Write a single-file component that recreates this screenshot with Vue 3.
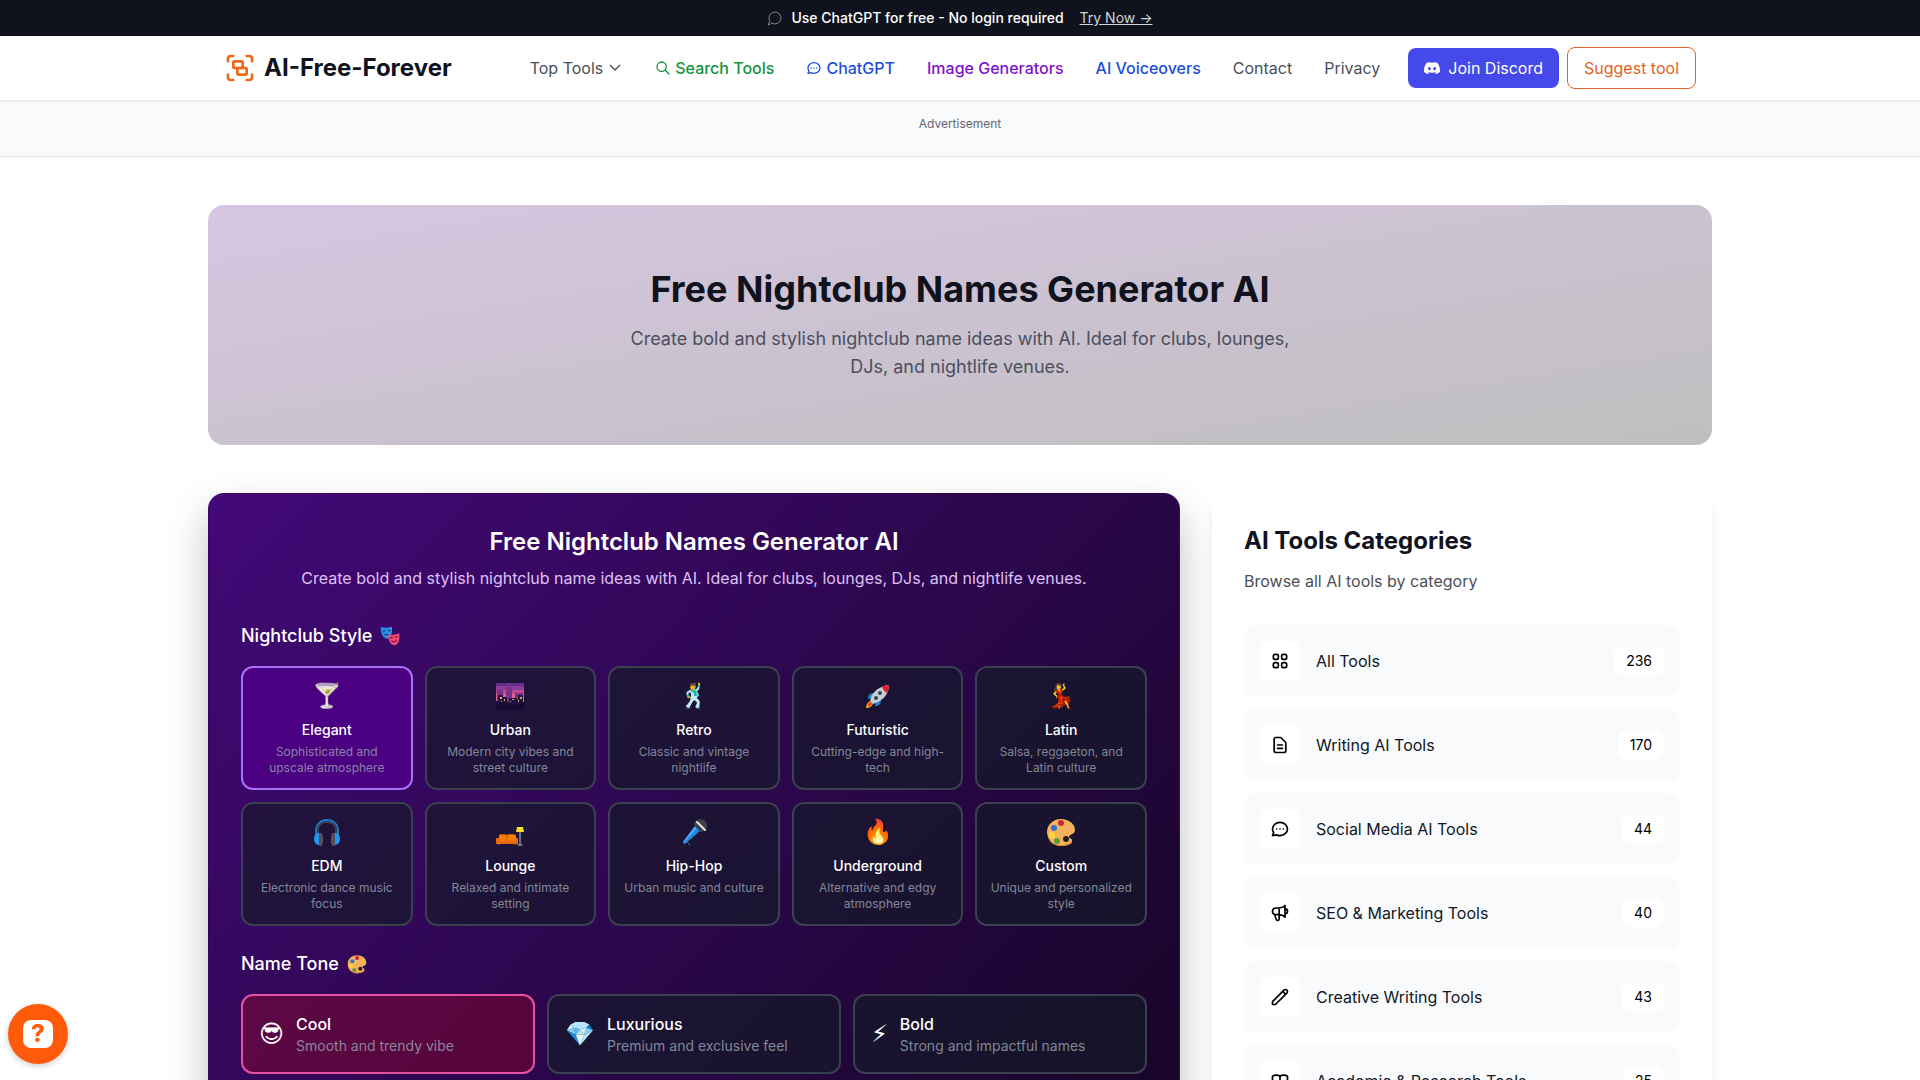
<template>
  <div class="page">
    <!-- Top announcement -->
    <div class="announce">
      <svg class="icon-thin" width="16" height="16" viewBox="0 0 24 24">
        <path d="M7.9 20A9 9 0 1 0 4 16.1L2 22Z" />
      </svg>
      <span class="announce-text">Use ChatGPT for free - No login required</span>
      <a href="#" class="announce-link">Try Now →</a>
    </div>

    <header class="header">
      <div class="header-inner">
        <a href="#" class="brand">
          <svg class="icon" width="32" height="32" viewBox="0 0 24 24">
            <path d="M3 7V5c0-1.1.9-2 2-2h2M17 3h2c1.1 0 2 .9 2 2v2M21 17v2c0 1.1-.9 2-2 2h-2M7 21H5c-1.1 0-2-.9-2-2v-2" />
            <rect x="7" y="7" width="7" height="5" rx="1" />
            <rect x="10" y="12" width="7" height="5" rx="1" />
          </svg>
          <span class="brand-name">AI-Free-Forever</span>
        </a>

        <nav class="nav">
          <button type="button" class="nav-link nav-drop">
            Top Tools
            <svg class="icon" width="16" height="16" viewBox="0 0 24 24">
              <path d="M5 8l7 7 7-7" />
            </svg>
          </button>
          <a href="#" class="nav-link green">
            <svg class="icon" width="16" height="16" viewBox="0 0 24 24">
              <path d="M21 21l-6-6m2-5a7 7 0 11-14 0 7 7 0 0114 0z" />
            </svg>
            Search Tools
          </a>
          <a href="#" class="nav-link blue">
            <svg class="icon" width="16" height="16" viewBox="0 0 24 24">
              <path :d="icons.chat" />
            </svg>
            ChatGPT
          </a>
          <a href="#" class="nav-link purple">Image Generators</a>
          <a href="#" class="nav-link blue">AI Voiceovers</a>
          <a href="#" class="nav-link">Contact</a>
          <a href="#" class="nav-link">Privacy</a>
        </nav>

        <div class="actions">
          <a href="#" class="btn btn-discord">
            <svg width="16" height="16" viewBox="0 0 24 24" fill="currentColor">
              <path d="M20.317 4.37a19.79 19.79 0 00-4.885-1.515.074.074 0 00-.079.037c-.21.375-.444.864-.608 1.25a18.27 18.27 0 00-5.487 0 12.64 12.64 0 00-.617-1.25.077.077 0 00-.079-.037A19.736 19.736 0 003.677 4.37a.07.07 0 00-.032.027C.533 9.046-.32 13.58.099 18.057a.082.082 0 00.031.057 19.9 19.9 0 005.993 3.03.078.078 0 00.084-.028c.462-.63.874-1.295 1.226-1.994a.076.076 0 00-.041-.106 13.107 13.107 0 01-1.872-.892.077.077 0 01-.008-.128c.126-.094.252-.192.372-.292a.074.074 0 01.077-.01c3.928 1.793 8.18 1.793 12.062 0a.074.074 0 01.078.01c.12.098.246.198.373.292a.077.077 0 01-.006.127 12.3 12.3 0 01-1.873.892.077.077 0 00-.041.107c.36.698.772 1.362 1.225 1.993a.076.076 0 00.084.028 19.839 19.839 0 006.002-3.03.077.077 0 00.032-.054c.5-5.177-.838-9.674-3.549-13.66a.061.061 0 00-.031-.03zM8.02 15.33c-1.183 0-2.157-1.085-2.157-2.419 0-1.333.956-2.419 2.157-2.419 1.21 0 2.176 1.096 2.157 2.42 0 1.333-.956 2.418-2.157 2.418zm7.975 0c-1.183 0-2.157-1.085-2.157-2.419 0-1.333.955-2.419 2.157-2.419 1.21 0 2.176 1.096 2.157 2.42 0 1.333-.946 2.418-2.157 2.418z" />
            </svg>
            Join Discord
          </a>
          <a href="#" class="btn btn-suggest">Suggest tool</a>
        </div>
      </div>
    </header>

    <div class="ad">Advertisement</div>

    <main class="container">
      <section class="hero">
        <h1 class="hero-title">Free Nightclub Names Generator AI</h1>
        <p class="hero-text">
          Create bold and stylish nightclub name ideas with AI. Ideal for clubs, lounges, DJs, and nightlife venues.
        </p>
      </section>

      <div class="columns">
        <section class="generator">
          <h2 class="gen-title">Free Nightclub Names Generator AI</h2>
          <p class="gen-text">
            Create bold and stylish nightclub name ideas with AI. Ideal for clubs, lounges, DJs, and nightlife venues.
          </p>

          <h3 class="group-title">
            Nightclub Style
            <svg width="20" height="20" viewBox="-1 -1 30 30">
              <path v-for="(p, i) in art.masks" :key="i" :d="p[0]" :fill="p[1]" :stroke="p[2]" :stroke-width="p[3]" />
            </svg>
          </h3>
          <div class="styles">
            <button
              v-for="item in styles"
              :key="item.name"
              type="button"
              class="style-card"
              :class="{ active: item.name === selectedStyle }"
              @click="selectedStyle = item.name"
            >
              <span class="style-emoji">
                <svg v-if="item.art" width="28" height="28" viewBox="0 0 28 28">
                  <path
                    v-for="(p, i) in art[item.art]"
                    :key="i"
                    :d="p[0]"
                    :fill="p[1]"
                    :stroke="p[2]"
                    :stroke-width="p[3]"
                    stroke-linecap="round"
                  />
                </svg>
                <template v-else>{{ item.emoji }}</template>
              </span>
              <span class="style-name">{{ item.name }}</span>
              <span class="style-desc">{{ item.desc }}</span>
            </button>
          </div>

          <h3 class="group-title">
            Name Tone
            <svg width="20" height="20" viewBox="-1 -1 30 30">
              <path v-for="(p, i) in art.palette" :key="i" :d="p[0]" :fill="p[1]" :stroke="p[2]" :stroke-width="p[3]" />
            </svg>
          </h3>
          <div class="tones">
            <button
              v-for="tone in tones"
              :key="tone.name"
              type="button"
              class="tone-card"
              :class="{ active: tone.name === selectedTone }"
              @click="selectedTone = tone.name"
            >
              <span class="tone-emoji">{{ tone.emoji }}</span>
              <span class="tone-body">
                <span class="tone-name">{{ tone.name }}</span>
                <span class="tone-desc">{{ tone.desc }}</span>
              </span>
            </button>
          </div>
        </section>

        <aside class="sidebar">
          <h2 class="side-title">AI Tools Categories</h2>
          <p class="side-text">Browse all AI tools by category</p>
          <ul class="categories">
            <li v-for="cat in categories" :key="cat.name">
              <a href="#" class="category">
                <span class="category-icon">
                  <svg class="icon" width="20" height="20" viewBox="0 0 24 24">
                    <path :d="icons[cat.icon]" />
                  </svg>
                </span>
                <span class="category-name">{{ cat.name }}</span>
                <span class="category-count">{{ cat.count }}</span>
              </a>
            </li>
          </ul>
        </aside>
      </div>
    </main>

    <button type="button" class="help"><span class="help-mark">?</span></button>
  </div>
</template>

<script setup>
import { ref } from 'vue'

const selectedStyle = ref('Elegant')
const selectedTone = ref('Cool')

const styles = [
  { name: 'Elegant', emoji: '🍸', desc: 'Sophisticated and upscale atmosphere' },
  { name: 'Urban', art: 'city', desc: 'Modern city vibes and street culture' },
  { name: 'Retro', emoji: '🕺', desc: 'Classic and vintage nightlife' },
  { name: 'Futuristic', art: 'rocket', desc: 'Cutting-edge and high-tech' },
  { name: 'Latin', emoji: '💃', desc: 'Salsa, reggaeton, and Latin culture' },
  { name: 'EDM', art: 'headphones', desc: 'Electronic dance music focus' },
  { name: 'Lounge', art: 'sofa', desc: 'Relaxed and intimate setting' },
  { name: 'Hip-Hop', art: 'mic', desc: 'Urban music and culture' },
  { name: 'Underground', emoji: '🔥', desc: 'Alternative and edgy atmosphere' },
  { name: 'Custom', art: 'palette', desc: 'Unique and personalized style' },
]

const tones = [
  { name: 'Cool', emoji: '😎\uFE0E', desc: 'Smooth and trendy vibe' },
  { name: 'Luxurious', emoji: '💎', desc: 'Premium and exclusive feel' },
  { name: 'Bold', emoji: '⚡\uFE0E', desc: 'Strong and impactful names' },
]

const categories = [
  { name: 'All Tools', count: 236, icon: 'grid' },
  { name: 'Writing AI Tools', count: 170, icon: 'doc' },
  { name: 'Social Media AI Tools', count: 44, icon: 'chat' },
  { name: 'SEO & Marketing Tools', count: 40, icon: 'horn' },
  { name: 'Creative Writing Tools', count: 43, icon: 'pencil' },
  { name: 'Academic & Research Tools', count: 25, icon: 'book' },
]

const icons = {
  grid: 'M4 6a2 2 0 012-2h2a2 2 0 012 2v2a2 2 0 01-2 2H6a2 2 0 01-2-2V6zM14 6a2 2 0 012-2h2a2 2 0 012 2v2a2 2 0 01-2 2h-2a2 2 0 01-2-2V6zM4 16a2 2 0 012-2h2a2 2 0 012 2v2a2 2 0 01-2 2H6a2 2 0 01-2-2v-2zM14 16a2 2 0 012-2h2a2 2 0 012 2v2a2 2 0 01-2 2h-2a2 2 0 01-2-2v-2z',
  doc: 'M9 12h6m-6 4h6m2 5H7a2 2 0 01-2-2V5a2 2 0 012-2h5.586a1 1 0 01.707.293l5.414 5.414a1 1 0 01.293.707V19a2 2 0 01-2 2z',
  chat: 'M8 12h.01M12 12h.01M16 12h.01M21 12c0 4.418-4.03 8-9 8a9.863 9.863 0 01-4.255-.949L3 20l1.395-3.72C3.512 15.042 3 13.574 3 12c0-4.418 4.03-8 9-8s9 3.582 9 8z',
  horn: 'M11 5.882V19.24a1.76 1.76 0 01-3.417.592l-2.147-6.15M18 13a3 3 0 100-6M5.436 13.683A4.001 4.001 0 017 6h1.832c4.1 0 7.625-1.234 9.168-3v14c-1.543-1.766-5.067-3-9.168-3H7a3.988 3.988 0 01-1.564-.317z',
  pencil: 'M15.232 5.232l3.536 3.536m-2.036-5.036a2.5 2.5 0 113.536 3.536L6.5 21.036H3v-3.572L16.732 3.732z',
  book: 'M12 6.253v13m0-13C10.832 5.477 9.246 5 7.5 5S4.168 5.477 3 6.253v13C4.168 18.477 5.754 18 7.5 18s3.332.477 4.5 1.253m0-13C13.168 5.477 14.754 5 16.5 5c1.747 0 3.332.477 4.5 1.253v13C19.832 18.477 18.247 18 16.5 18c-1.746 0-3.332.477-4.5 1.253',
}

// colour drawings, each entry is [path, fill, stroke, stroke width]
const art = {
  city: [
    ['M0 1h28v27H0z', '#5d2f91'],
    ['M0 4h28v4H0z', '#8b3c97'],
    ['M0 8h28v4H0z', '#c04d92'],
    ['M0 12h28v8H0z', '#e0628a'],
    ['M10 6l1-1V2h4v3l1 1v14h-6zM1 8h6v12H1zM19 11h8v9h-8z', '#793189'],
    ['M0 19h2v-6h5v2h4v5h2v-4h8v2h1v-5h5v15H0z', '#251047'],
    ['M0 20h8v-2h3v4h10v-2h7v8H0z', '#180a36'],
    ['M4 15h2v2H4zM8 17h1v2H8zM16 17h2v1h-2zM14 19h1v1h-1zM24 15h2v2h-2zM22 18h1v2h-1zM5 19h1v1H5z', '#e2a84c'],
  ],
  rocket: [
    ['M2 26c0-4 2-6 4-7l3 3c-1 2-3 4-7 4z', '#f6a21c'],
    ['M4 24c0-2 1-3 2-4l2 2c-1 1-2 2-4 2z', '#d9381e'],
    ['M10 11c-4 0-6 2-6 6l4-1zM17 18c0 4-2 6-6 6l1-5z', '#1e88c9'],
    ['M6 19C8 10 15 4 25 3c0 10-7 16-16 19z', '#c9ced3'],
    ['M18 5c2-1 5-2 7-2 0 2-1 6-2 8-2-1-4-3-5-6z', '#dc1f2e'],
    ['M14 11a2 2 0 104 0 2 2 0 10-4 0zM10 16a2 2 0 104 0 2 2 0 10-4 0z', '#2d4552'],
  ],
  headphones: [
    ['M3 19v-6C3 6 8 2 14 2s11 4 11 11v6', 'none', '#1f78c8', 2],
    ['M5 19v-6c0-6 4-9 9-9s9 3 9 9v6', 'none', '#3d434b', 2],
    ['M5 15c-3 1-4 3-4 6s2 6 5 6V15zM23 15c3 1 4 3 4 6s-2 6-5 6V15z', '#2095ee'],
    ['M6 15h3v13H6zM19 15h3v13h-3z', '#4f5156'],
    ['M9 16c1 3 1 8 0 11zM19 16c-1 3-1 8 0 11z', '#77797d'],
  ],
  sofa: [
    ['M21 9h6l1 5h-8z', '#f7df2e'],
    ['M24 14v12M22 27h4', 'none', '#c7c9cc', 1],
    ['M3 17c0-1 7-1 8 0 1-1 8-1 9 0v6H3z', '#f57c00'],
    ['M11 17v6', 'none', '#c75a00', 1],
    ['M0 20h3v3h17v-3h2v6H0z', '#e8690b'],
    ['M2 26h2v1H2zM18 26h2v1h-2z', '#8a3b08'],
  ],
  mic: [
    ['M4 26c1-3 4-2 5 0s2 1 0 0', 'none', '#5e6770', 1],
    ['M15 8l5 5L5 26l-2-2z', '#2087e3'],
    ['M15 8l2 2L4 25l-1-1z', '#4ba7f2'],
    ['M14 7c0-4 3-6 7-6 4 1 6 4 6 7-1 4-3 6-7 6z', '#3c4247'],
    ['M17 4l8 8', 'none', '#e6e9eb', 2],
  ],
  palette: [
    ['M14 1C6 1 0 7 0 14s6 14 14 14c5 0 10-2 11-5 1-3-3-2-3-4 0-3 6-2 6-7 0-6-6-11-14-11z', '#f5b25d'],
    ['M14 27c5 0 10-2 11-4v2c-2 2-6 3-11 3C7 28 2 24 1 19c2 5 7 8 13 8z', '#d98b35'],
    ['M11 5a3 3 0 106 0 3 3 0 10-6 0z', '#c8293a'],
    ['M4 10a3 3 0 106 0 3 3 0 10-6 0z', '#2b74d2'],
    ['M2 17a3 3 0 106 0 3 3 0 10-6 0z', '#fdd835'],
    ['M7 23a3 3 0 106 0 3 3 0 10-6 0z', '#5c9e31'],
    ['M16 21a3 3 0 106 0 3 3 0 10-6 0z', '#2a1920'],
  ],
  masks: [
    ['M0 1c5 1 11 1 17-1 1 9-1 17-8 18C3 17 0 10 0 1z', '#2491ea'],
    ['M3 7l4-1M11 6l4 0M6 13c1-2 4-2 6 0', 'none', '#124a85', 2],
    ['M11 12c6 1 11 0 17-2 1 9-1 17-7 18-7-1-10-8-10-16z', '#f04a7c'],
    ['M14 17l4-1M21 16l4-1M16 21c3 3 6 2 8-1', 'none', '#8c1545', 2],
  ],
}
</script>

<style>
body {
  background: #ffffff;
}
</style>

<style scoped>
.page {
  font-family: Inter, sans-serif;
  font-size: 16px;
  line-height: 24px;
  color: #111827;
}

.page * {
  box-sizing: border-box;
}

h1, h2, h3, p, ul {
  margin: 0;
  padding: 0;
}

a {
  color: inherit;
  text-decoration: none;
}

button {
  font-family: inherit;
  cursor: pointer;
}

.icon,
.icon-thin {
  fill: none;
  stroke: currentColor;
  stroke-width: 2;
  stroke-linecap: round;
  stroke-linejoin: round;
  flex-shrink: 0;
}
.icon-thin {
  stroke-width: 1;
  margin-right: 8px;
  color: #b6b9c0;
}

/* Announcement bar */
.announce {
  display: flex;
  justify-content: center;
  align-items: center;
  padding: 8px 16px;
  background: #10131e;
  color: #ffffff;
  font-size: 14px;
  line-height: 20px;
}
.announce-text {
  margin-right: 16px;
  font-weight: 500;
}
.announce-link {
  color: #d1d5db;
  text-decoration: underline;
}

/* Header */
.header {
  position: relative;
  background: #ffffff;
  box-shadow: 0 1px 3px rgba(0, 0, 0, 0.1);
}
.header-inner {
  display: flex;
  align-items: center;
  max-width: 1504px;
  min-height: 64px;
  margin: 0 auto;
  padding: 0 16px;
}
.brand {
  display: flex;
  align-items: center;
  gap: 8px;
  margin-right: auto;
  color: #ea6a1c;
}
.brand-name {
  font-size: 24px;
  line-height: 32px;
  font-weight: 700;
  color: #10131e;
}
.nav {
  display: flex;
  align-items: center;
  gap: 32px;
  margin-right: 28px;
}
.nav-link {
  display: flex;
  align-items: center;
  gap: 4px;
  color: #4b4f58;
}
.nav-drop {
  padding: 0;
  border: none;
  background: none;
  font-size: 16px;
  line-height: 24px;
}
.green {
  color: #15933f;
  font-weight: 500;
}
.blue {
  color: #1d4ed8;
  font-weight: 500;
}
.purple {
  color: #7e12ce;
  font-weight: 500;
}
.actions {
  display: flex;
  align-items: center;
  gap: 8px;
}
.btn {
  display: flex;
  align-items: center;
  gap: 8px;
  padding: 8px 16px;
  border-radius: 8px;
}
.btn-discord {
  background: #4649ea;
  color: #ffffff;
}
.btn-suggest {
  border: 1px solid #e0622a;
  color: #e8601c;
}

/* Ad strip */
.ad {
  padding: 16px 16px 24px;
  border-bottom: 1px solid #e0e3e6;
  background: #f9fafb;
  font-size: 12px;
  line-height: 16px;
  text-align: center;
  color: #63666e;
}

.container {
  max-width: 1504px;
  margin: 0 auto;
  padding-top: 48px;
}

/* Hero */
.hero {
  padding: 64px 32px;
  border-radius: 16px;
  background: linear-gradient(to bottom right, #d7c6e2, #bfbfbf);
  text-align: center;
}
.hero-title {
  margin-bottom: 16px;
  font-size: 36px;
  line-height: 40px;
  font-weight: 700;
  color: #10131e;
}
.hero-text {
  max-width: 672px;
  margin: 0 auto;
  font-size: 18px;
  line-height: 28px;
  color: #4b4f5e;
}

.columns {
  display: grid;
  grid-template-columns: minmax(0, 1fr) 500px;
  gap: 32px;
  margin-top: 48px;
}

/* Generator card */
.generator {
  min-height: 1030px;
  padding: 32px;
  border: 1px solid rgba(75, 0, 130, 0.5);
  border-radius: 16px;
  background: linear-gradient(to bottom right, #430878, #0c0512);
  box-shadow: 0 20px 40px rgba(0, 0, 0, 0.25);
  color: #ffffff;
}
.gen-title {
  margin-bottom: 8px;
  font-size: 24px;
  line-height: 32px;
  font-weight: 600;
  text-align: center;
}
.gen-text {
  margin-bottom: 32px;
  text-align: center;
  color: #dfc0f8;
}
.group-title {
  display: flex;
  align-items: center;
  gap: 8px;
  margin-bottom: 16px;
  font-size: 18px;
  line-height: 28px;
  font-weight: 500;
}
.styles {
  display: grid;
  grid-template-columns: repeat(5, minmax(0, 1fr));
  gap: 12px;
  margin-bottom: 24px;
}
.style-card,
.tone-card {
  border: 2px solid #3a404f;
  border-radius: 12px;
  background: rgba(20, 26, 40, 0.65);
  color: #ffffff;
}
.style-card {
  display: flex;
  flex-direction: column;
  align-items: center;
  padding: 12px;
}
.style-card.active {
  border-color: #a970fa;
  background: #4b0082;
}
.style-emoji {
  display: flex;
  align-items: center;
  height: 32px;
  margin-bottom: 8px;
  font-size: 24px;
  line-height: 32px;
}
.style-name {
  margin-bottom: 4px;
  font-size: 14px;
  line-height: 20px;
  font-weight: 500;
}
.style-desc {
  font-size: 12px;
  line-height: 16px;
  color: #9ca3af;
  opacity: 0.8;
}

.tones {
  display: grid;
  grid-template-columns: repeat(3, minmax(0, 1fr));
  gap: 12px;
}
.tone-card {
  display: flex;
  align-items: center;
  gap: 12px;
  padding: 16px;
  text-align: left;
}
.tone-card.active {
  border-color: #e850a4;
  background: linear-gradient(135deg, #5c0846, #54053a);
}
.tone-emoji {
  font-family: Inter, "DejaVu Sans", sans-serif;
  font-size: 24px;
  line-height: 32px;
}
.tone-body {
  display: flex;
  flex-direction: column;
}
.tone-name {
  font-size: 16px;
  line-height: 24px;
  font-weight: 500;
}
.tone-desc {
  font-size: 14px;
  line-height: 20px;
  color: #9ca3af;
  opacity: 0.8;
}

/* Sidebar */
.sidebar {
  padding: 32px;
  border-radius: 16px;
  background: #ffffff;
  box-shadow: 0 10px 15px -3px rgba(0, 0, 0, 0.1), 0 4px 6px -4px rgba(0, 0, 0, 0.1);
}
.side-title {
  margin-bottom: 12px;
  font-size: 24px;
  line-height: 32px;
  font-weight: 700;
  color: #10131e;
}
.side-text {
  margin-bottom: 32px;
  color: #4b4f58;
}
.categories {
  display: flex;
  flex-direction: column;
  gap: 12px;
  list-style: none;
}
.category {
  display: flex;
  align-items: center;
  gap: 16px;
  padding: 16px;
  border-radius: 12px;
  background: #f9fafb;
}
.category-icon {
  display: flex;
  justify-content: center;
  align-items: center;
  width: 40px;
  height: 40px;
  border-radius: 8px;
  background: #ffffff;
  color: #000000;
}
.category-name {
  flex: 1;
}
.category-count {
  padding: 4px 12px;
  border-radius: 8px;
  background: #ffffff;
  font-size: 14px;
  line-height: 20px;
  color: #000000;
}

/* Floating help button */
.help {
  position: fixed;
  left: 8px;
  bottom: 16px;
  display: flex;
  justify-content: center;
  align-items: center;
  width: 60px;
  height: 60px;
  padding: 0;
  border: none;
  border-radius: 50%;
  background: #ff5a0a;
  box-shadow: 0 2px 6px rgba(0, 0, 0, 0.2);
}
.help-mark {
  width: 30px;
  height: 28px;
  border-radius: 8px;
  background: #ffffff;
  font-size: 24px;
  line-height: 28px;
  font-weight: 800;
  color: #ff5a0a;
}
</style>
